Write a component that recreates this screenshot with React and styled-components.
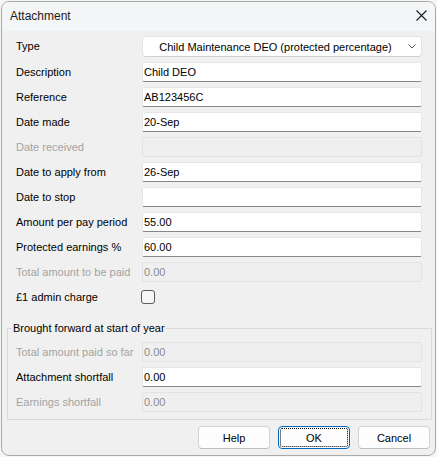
import React from 'react';
import styled, { createGlobalStyle } from 'styled-components';

const GlobalStyle = createGlobalStyle`
  html, body {
    margin: 0;
    padding: 0;
    background: #f4f6f3;
  }
  body {
    font-family: "Liberation Sans", Arial, sans-serif;
    font-size: 11px;
    color: #000;
  }
`;

const Window = styled.div`
  margin: 1px;
  width: 435px;
  height: 455px;
  box-sizing: border-box;
  border: 1px solid #a9a9a9;
  border-radius: 8px;
  overflow: hidden;
  background: #f0f0f0;
  display: flex;
  flex-direction: column;
`;

const TitleBar = styled.div`
  height: 29px;
  flex: none;
  display: flex;
  align-items: center;
  justify-content: space-between;
  padding: 0 8px 2px 8px;
  box-sizing: border-box;
  background: #f4f5f7;
`;

const Title = styled.span`
  font-size: 12px;
  color: #1a1a1a;
`;

const Close = styled.button`
  border: 0;
  padding: 0;
  background: none;
  display: flex;
  align-items: center;
`;

const Body = styled.div`
  flex: 1;
  display: flex;
  flex-direction: column;
  padding: 5px 3px 0 5px;
`;

const Form = styled.div`
  display: grid;
  grid-template-columns: 126px 1fr;
  row-gap: 5px;
  align-items: center;
  padding: ${(p) => p.$pad || '0 10px 0 9px'};
`;

const Label = styled.label`
  color: ${(p) => (p.$disabled ? '#a3a3a3' : '#000')};
  line-height: 13px;
  white-space: nowrap;
`;

const Field = styled.input`
  height: 20px;
  width: 100%;
  box-sizing: border-box;
  margin: 0;
  padding: 0 1px 1px;
  border: 1px solid #e6e6e6;
  border-bottom-color: #878787;
  border-radius: 2px;
  background: #fff;
  font-family: inherit;
  font-size: 11px;
  color: #000;
  outline: none;

  &:disabled {
    background: #efefef;
    border-color: #e2e2e2;
    color: #8c8c8c;
  }
`;

const Combo = styled.div`
  height: 21px;
  box-sizing: border-box;
  display: flex;
  align-items: center;
  background: #fff;
  border: 1px solid #e3e3e3;
  border-bottom-color: #cfcfcf;
  border-radius: 4px;
  padding-right: 5px;
`;

const ComboText = styled.span`
  flex: 1;
  text-align: center;
  padding-left: 4px;
  padding-right: 4px;
`;

const CheckCell = styled.div`
  height: 20px;
  display: flex;
  align-items: center;
  margin-left: -1px;
`;

const Check = styled.span`
  width: 14px;
  height: 14px;
  box-sizing: border-box;
  border: 1px solid #5c5c5c;
  border-radius: 3px;
  background: #f6f6f6;
`;

const Group = styled.fieldset`
  margin: 15px 0 0 0;
  padding: 7px 0 7px 0;
  border: 1px solid #dadada;
  min-width: 0;
`;

const Legend = styled.legend`
  margin-left: 4px;
  padding: 0 1px;
  line-height: 13px;
`;

const Footer = styled.div`
  display: flex;
  justify-content: flex-end;
  gap: 8px;
  margin-top: 6px;
  padding-right: 2px;
`;

const Button = styled.button`
  position: relative;
  width: 72px;
  height: 23px;
  box-sizing: border-box;
  margin: 0;
  padding: 0;
  border: 1px solid ${(p) => (p.$default ? '#0067c0' : '#d2d2d2')};
  border-bottom-color: ${(p) => (p.$default ? '#0067c0' : '#bdbdbd')};
  border-radius: 4px;
  background: #fdfdfd;
  font-family: inherit;
  font-size: 11px;
  color: #000;

  ${(p) =>
    p.$default &&
    `&::after {
      content: "";
      position: absolute;
      inset: 1px;
      border: 1px dotted #000;
      border-radius: 2px;
    }`}
`;

const rows = [
  { label: 'Description', value: 'Child DEO' },
  { label: 'Reference', value: 'AB123456C' },
  { label: 'Date made', value: '20-Sep' },
  { label: 'Date received', value: '', disabled: true },
  { label: 'Date to apply from', value: '26-Sep' },
  { label: 'Date to stop', value: '' },
  { label: 'Amount per pay period', value: '55.00' },
  { label: 'Protected earnings %', value: '60.00' },
  { label: 'Total amount to be paid', value: '0.00', disabled: true },
];

const broughtForward = [
  { label: 'Total amount paid so far', value: '0.00', disabled: true },
  { label: 'Attachment shortfall', value: '0.00' },
  { label: 'Earnings shortfall', value: '0.00', disabled: true },
];

const FieldRow = ({ label, value, disabled }) => (
  <>
    <Label $disabled={disabled}>{label}</Label>
    <Field defaultValue={value} disabled={disabled} readOnly={!disabled} />
  </>
);

export default function App() {
  return (
    <>
      <GlobalStyle />
      <Window>
        <TitleBar>
          <Title>Attachment</Title>
          <Close aria-label="Close">
            <svg width="11" height="11" viewBox="0 0 11 11">
              <path d="M0.5 0.5 L10.5 10.5 M10.5 0.5 L0.5 10.5" stroke="#1a1a1a" strokeWidth="1.1" fill="none" />
            </svg>
          </Close>
        </TitleBar>
        <Body>
          <Form>
            <Label>Type</Label>
            <Combo>
              <ComboText>Child Maintenance DEO (protected percentage)</ComboText>
              <svg width="8" height="5" viewBox="0 0 8 5">
                <path d="M0.5 0.5 L4 4 L7.5 0.5" stroke="#5f5f5f" strokeWidth="1" fill="none" />
              </svg>
            </Combo>
            {rows.map((r) => (
              <FieldRow key={r.label} {...r} />
            ))}
            <Label>£1 admin charge</Label>
            <CheckCell>
              <Check />
            </CheckCell>
          </Form>
          <Group>
            <Legend>Brought forward at start of year</Legend>
            <Form $pad="0 9px 0 8px">
              {broughtForward.map((r) => (
                <FieldRow key={r.label} {...r} />
              ))}
            </Form>
          </Group>
          <Footer>
            <Button>Help</Button>
            <Button $default>OK</Button>
            <Button>Cancel</Button>
          </Footer>
        </Body>
      </Window>
    </>
  );
}
